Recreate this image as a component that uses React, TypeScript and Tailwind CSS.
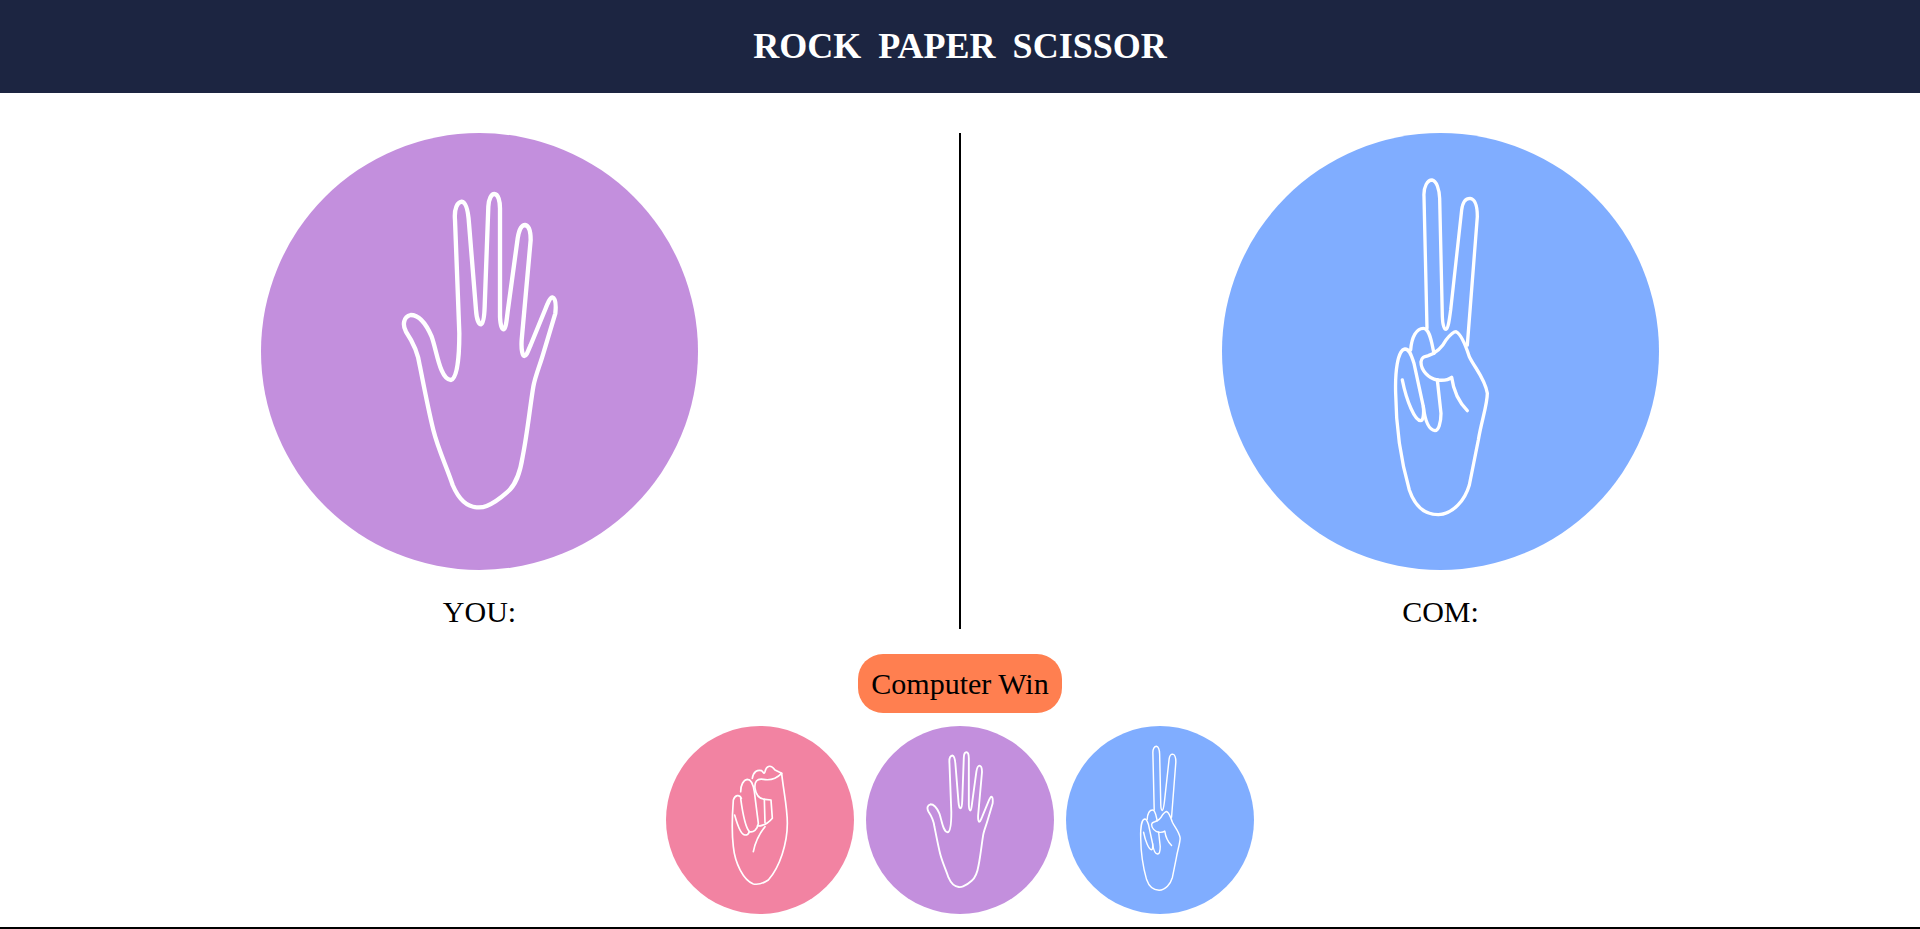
import React from "react";

const PaperHand = () => (
  <svg viewBox="-327 -111 1311 1311" className="w-full h-full" fill="none" stroke="white" strokeWidth="13" strokeLinejoin="round" strokeLinecap="round">
    <path d="M108 485C97 465 100 440 122 435C150 435 170 465 185 500C200 540 210 630 243 630C262 625 268 560 268 490L255 150C252 115 262 97 275 95C290 97 295 130 297 160L318 420C320 450 328 463 333 463C340 460 343 440 344 410L355 110C356 85 365 72 373 72C385 72 390 95 390 115L390 440C391 465 395 478 401 478C408 475 410 450 413 425L443 205C447 180 455 165 465 165C478 167 482 185 482 210L455 510C453 540 458 558 463 558C470 558 475 540 482 525L525 420C533 400 540 382 547 382C558 385 558 410 556 430L520 550C510 585 495 620 490 650C480 710 472 790 458 860C450 910 438 945 410 968C392 984 375 998 350 1008C340 1012 330 1013 320 1012C290 1010 265 985 248 945C230 890 205 840 190 780C175 720 160 640 150 590C145 550 125 510 108 485Z" />
  </svg>
);

const ScissorsHand = () => (
  <svg viewBox="-414 -81 1311 1311" className="w-full h-full" fill="none" stroke="white" strokeWidth="10" strokeLinejoin="round" strokeLinecap="round">
    <path d="M201 505L192 110C190 80 203 60 216 60C230 62 238 90 239 115L247 470C248 495 252 508 258 508C265 505 268 480 272 450L305 150C308 125 318 115 330 115C345 117 352 140 352 170L322 555" />
    <path d="M232 660C205 655 182 630 183 605C185 590 195 590 205 587C225 580 245 565 258 540C270 525 280 515 288 515C300 520 315 550 328 590C345 625 375 655 382 700C382 735 365 780 355 840C345 890 335 940 328 975C315 1020 280 1062 235 1064C195 1064 165 1040 148 990C125 910 108 800 107 700C105 640 112 570 135 567C150 567 155 590 162 610L190 740C192 760 190 782 182 782C165 782 140 725 127 660" />
    <path d="M152 570C155 530 170 505 190 505C210 505 215 550 222 580" />
    <path d="M232 660L243 760C243 790 235 812 225 812C205 810 195 780 190 740" />
    <path d="M232 660C250 662 265 660 275 652C280 690 295 725 322 752" />
  </svg>
);

const RockHand = () => (
  <svg viewBox="-102 18 564 564" className="w-full h-full" fill="none" stroke="white" strokeWidth="5" strokeLinejoin="round" strokeLinecap="round">
    <path d="M245 160C250 210 262 260 262 310C262 370 240 440 205 480C190 490 175 495 160 492C130 480 105 430 100 380C95 340 97 280 100 240C105 225 118 222 124 235" />
    <path d="M104 285C115 325 125 345 135 345C145 345 148 335 148 335" />
    <path d="M122 215C122 195 130 180 142 178C155 178 160 195 163 215L175 310C172 330 160 338 148 335C135 320 128 280 122 235" />
    <path d="M157 175C160 155 172 148 185 152C190 155 192 165 195 155C198 140 210 130 225 150L245 160C230 175 210 182 190 178C170 175 163 185 165 205C168 225 180 237 195 238L213 240L217 295C205 310 190 318 172 318" />
    <path d="M193 238L195 308" />
    <path d="M195 320C175 345 165 370 160 395" />
  </svg>
);

export default function App() {
  return (
    <div className="h-[929px] flex flex-col bg-white text-black border-b-2 border-black font-['Liberation_Serif',serif]">
      <header className="h-[93px] shrink-0 flex items-center justify-center pb-[2px] bg-[#1c2541]">
        <h1 className="text-white font-bold text-[36px] [word-spacing:8px]">ROCK PAPER SCISSOR</h1>
      </header>

      {/* Score board */}
      <div className="flex justify-center mt-[40px] h-[496px]">
        <div className="flex-1 flex flex-col items-center">
          <div className="w-[437px] h-[437px] rounded-full bg-[#c38fdd]">
            <PaperHand />
          </div>
          <p className="mt-[23px] text-[30px] leading-[38px]">YOU:</p>
        </div>
        <div className="w-[2px] bg-black" />
        <div className="flex-1 flex flex-col items-center">
          <div className="w-[437px] h-[437px] rounded-full bg-[#80adff]">
            <ScissorsHand />
          </div>
          <p className="mt-[23px] text-[30px] leading-[38px]">COM:</p>
        </div>
      </div>

      {/* Result */}
      <div className="flex justify-center mt-[25px]">
        <div className="h-[59px] px-[13px] flex items-center rounded-[25px] bg-[#ff7f50] text-[30px]">Computer Win</div>
      </div>

      {/* Choices */}
      <div className="flex justify-center gap-[12px] mt-[13px]">
        <button className="w-[188px] h-[188px] rounded-full bg-[#f283a2]">
          <RockHand />
        </button>
        <button className="w-[188px] h-[188px] rounded-full bg-[#c38fdd]">
          <PaperHand />
        </button>
        <button className="w-[188px] h-[188px] rounded-full bg-[#80adff]">
          <ScissorsHand />
        </button>
      </div>
    </div>
  );
}
